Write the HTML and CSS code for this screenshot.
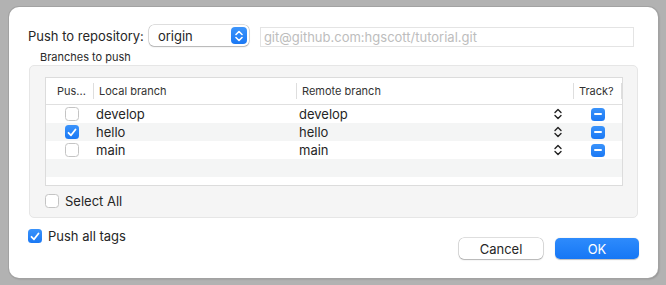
FILE: index.html
```html
<!DOCTYPE html>
<html lang="en">
<head>
    <meta charset="UTF-8">
    <title>Push</title>
    <link rel="stylesheet" href="styles.css">
</head>
<body>
    <div class="dialog">
        <!-- Repository -->
        <div class="repo-row">
            <span class="repo-label">Push to repository:</span>
            <div class="popup">
                <span class="popup-text">origin</span>
                <span class="popup-stepper">
                    <svg width="8" height="12" viewBox="0 0 8 12"><path d="M1 4.5 L4 1.5 L7 4.5 M1 7.5 L4 10.5 L7 7.5" fill="none" stroke="#fff" stroke-width="1.6" stroke-linecap="round" stroke-linejoin="round"/></svg>
                </span>
            </div>
            <div class="url-field">git@github.com:hgscott/tutorial.git</div>
        </div>

        <div class="group-title">Branches to push</div>
        <div class="group">
            <div class="table">
                <div class="row head">
                    <div class="cell c-push">Pus...</div>
                    <div class="cell c-local">Local branch</div>
                    <div class="cell c-remote">Remote branch</div>
                    <div class="cell c-track">Track?</div>
                </div>
                <div class="row">
                    <div class="cell c-push"><span class="checkbox"></span></div>
                    <div class="cell c-local">develop</div>
                    <div class="cell c-remote">develop<span class="arrows"><svg width="8" height="12" viewBox="0 0 8 12"><path d="M1 4.5 L4 1.5 L7 4.5 M1 7.5 L4 10.5 L7 7.5" fill="none" stroke="#222" stroke-width="1.4" stroke-linecap="round" stroke-linejoin="round"/></svg></span></div>
                    <div class="cell c-track"><span class="minus"></span></div>
                </div>
                <div class="row alt">
                    <div class="cell c-push"><span class="checkbox checked"><svg width="10" height="9" viewBox="0 0 10 9"><path d="M1.5 4.8 L4 7.3 L8.5 1.5" fill="none" stroke="#fff" stroke-width="1.8" stroke-linecap="round" stroke-linejoin="round"/></svg></span></div>
                    <div class="cell c-local">hello</div>
                    <div class="cell c-remote">hello<span class="arrows"><svg width="8" height="12" viewBox="0 0 8 12"><path d="M1 4.5 L4 1.5 L7 4.5 M1 7.5 L4 10.5 L7 7.5" fill="none" stroke="#222" stroke-width="1.4" stroke-linecap="round" stroke-linejoin="round"/></svg></span></div>
                    <div class="cell c-track"><span class="minus"></span></div>
                </div>
                <div class="row">
                    <div class="cell c-push"><span class="checkbox"></span></div>
                    <div class="cell c-local">main</div>
                    <div class="cell c-remote">main<span class="arrows"><svg width="8" height="12" viewBox="0 0 8 12"><path d="M1 4.5 L4 1.5 L7 4.5 M1 7.5 L4 10.5 L7 7.5" fill="none" stroke="#222" stroke-width="1.4" stroke-linecap="round" stroke-linejoin="round"/></svg></span></div>
                    <div class="cell c-track"><span class="minus"></span></div>
                </div>
                <div class="row alt empty"></div>
            </div>
            <div class="check-row select-all">
                <span class="checkbox"></span>
                <span>Select All</span>
            </div>
        </div>

        <div class="footer">
            <div class="check-row">
                <span class="checkbox checked"><svg width="10" height="9" viewBox="0 0 10 9"><path d="M1.5 4.8 L4 7.3 L8.5 1.5" fill="none" stroke="#fff" stroke-width="1.8" stroke-linecap="round" stroke-linejoin="round"/></svg></span>
                <span>Push all tags</span>
            </div>
            <div class="buttons">
                <button class="btn">Cancel</button>
                <button class="btn primary">OK</button>
            </div>
        </div>
    </div>
</body>
</html>
```

FILE: styles.css
```css
body {
    margin: 0;
    padding: 7px 8px 7px 9px;
    background-color: #b2b2b2;
    font-family: 'Inter', 'Noto Sans', sans-serif;
    color: #262626;
}
.dialog {
    box-sizing: border-box;
    width: 649px;
    height: 271px;
    background-color: #fff;
    border-radius: 10px;
    box-shadow: 0 0 0 1px #a2a2a2, 1px 1px 2px rgba(0, 0, 0, 0.25);
    padding: 17px 19px 0 19px;
}
.repo-row {
    display: flex;
    align-items: center;
    height: 23px;
}
.repo-label {
    font-size: 13px;
    margin-right: 5px;
}
.popup {
    box-sizing: border-box;
    width: 100px;
    height: 21px;
    display: flex;
    align-items: center;
    justify-content: space-between;
    border-radius: 5px;
    background-color: #fff;
    box-shadow: 0 0 0 0.5px rgba(0, 0, 0, 0.25), 0 1px 1.5px rgba(0, 0, 0, 0.2);
    padding: 0 2px 0 9px;
    font-size: 13px;
}
.popup-stepper {
    width: 16px;
    height: 17px;
    border-radius: 4px;
    background: linear-gradient(#3d95fb, #1a78f4);
    display: flex;
    align-items: center;
    justify-content: center;
}
.url-field {
    box-sizing: border-box;
    width: 374px;
    height: 20px;
    margin-left: 11px;
    margin-top: 3px;
    border: 1px solid #e4e4e4;
    padding: 0 3px;
    font-size: 13px;
    line-height: 18px;
    color: #bdbdbd;
}
.group-title {
    font-size: 11px;
    margin: 3px 0 0 12px;
    height: 15px;
    line-height: 15px;
    color: #2a2a2a;
}
.group {
    box-sizing: border-box;
    margin-left: 1px;
    width: 609px;
    height: 153px;
    margin-top: 0;
    background-color: #f5f5f5;
    border: 1px solid #e6e6e6;
    border-radius: 5px;
    padding: 11px 15px 0 15px;
}
.table {
    box-sizing: border-box;
    width: 578px;
    height: 109px;
    border: 1px solid #dcdcdc;
    background-color: #fff;
    overflow: hidden;
}
.row {
    display: flex;
    height: 18px;
    align-items: center;
    font-size: 13px;
}
.row.alt {
    background-color: #f4f5f5;
}
.row.head {
    height: 26px;
    border-bottom: 1px solid #e0e0e0;
    font-size: 11px;
    color: #333;
}
.cell {
    box-sizing: border-box;
    display: flex;
    align-items: center;
    height: 100%;
}
.c-push { width: 47px; padding-left: 18px; }
.c-local { width: 203px; padding-left: 3px; }
.c-remote { width: 277px; padding-left: 3px; justify-content: space-between; padding-right: 11px; }
.c-track { width: 49px; justify-content: center; padding-left: 1px; }
.row.head .c-push { padding-left: 11px; }
.row.head .c-local,
.row.head .c-remote,
.row.head .c-track {
    border-left: 1px solid #dedede;
    height: 16px;
    padding-left: 5px;
    justify-content: flex-start;
}
.row.head .c-track {
    border-right: 1px solid #dedede;
}
.arrows {
    display: flex;
}
.minus {
    width: 14px;
    height: 13px;
    border-radius: 3.5px;
    background: linear-gradient(#3a93fb, #1a78f4);
    position: relative;
}
.minus::after {
    content: '';
    position: absolute;
    left: 3px;
    right: 3px;
    top: 5.5px;
    height: 2px;
    background-color: #fff;
    border-radius: 1px;
}
.checkbox {
    box-sizing: border-box;
    width: 14px;
    height: 14px;
    border-radius: 3.5px;
    background-color: #fff;
    border: 1px solid #c4c4c4;
    display: flex;
    align-items: center;
    justify-content: center;
    flex-shrink: 0;
}
.checkbox.checked {
    border: none;
    background: linear-gradient(#3a93fb, #1a78f4);
}
.row .checkbox {
    margin-left: 1px;
}
.check-row {
    display: flex;
    align-items: center;
    gap: 6px;
    font-size: 13px;
}
.select-all {
    margin-top: 8px;
    height: 14px;
}
.footer {
    display: flex;
    justify-content: space-between;
    align-items: flex-start;
    margin-top: 10px;
}
.buttons {
    display: flex;
    gap: 12px;
    margin-top: 10px;
    margin-right: 0;
}
.btn {
    box-sizing: border-box;
    width: 84px;
    height: 21px;
    border: none;
    border-radius: 5px;
    font-family: inherit;
    font-size: 13px;
    color: #262626;
    background-color: #fff;
    box-shadow: 0 0 0 0.5px rgba(0, 0, 0, 0.25), 0 1px 1.5px rgba(0, 0, 0, 0.2);
}
.btn.primary {
    color: #fff;
    background: linear-gradient(#2e8bfc, #1677f5);
    box-shadow: 0 0.5px 1px rgba(0, 0, 0, 0.25);
}
```
